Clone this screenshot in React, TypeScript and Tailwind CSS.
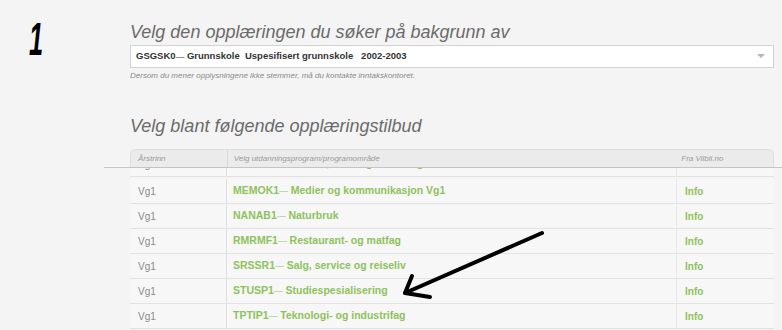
import React from "react";

const rows = [
  { code: "MEMOK1", name: "Medier og kommunikasjon Vg1" },
  { code: "NANAB1", name: "Naturbruk" },
  { code: "RMRMF1", name: "Restaurant- og matfag" },
  { code: "SRSSR1", name: "Salg, service og reiseliv" },
  { code: "STUSP1", name: "Studiespesialisering" },
  { code: "TPTIP1", name: "Teknologi- og industrifag" },
];

function Row({ code, name }: { code: string; name: string }) {
  return (
    <div className="flex h-[25px] border-b border-[#e2e2e2] bg-[#f7f7f7]">
      <div className="w-[96px] pl-2 flex items-center text-[10px] text-[#8a8a8a]">Vg1</div>
      <div className="w-[450px] pl-[6px] flex items-center border-l border-[#dedede] text-[10.5px] font-bold text-[#8fc25c] whitespace-pre">
        {code}
        <span className="tracking-[-0.5px] font-normal text-[8px]">----</span>
        <span className="ml-[3px]">{name}</span>
      </div>
      <div className="w-[98px] pl-[8px] flex items-center border-l border-[#e8e8e8] text-[10px] font-bold text-[#8fc25c]">Info</div>
    </div>
  );
}

export default function App() {
  return (
    <div
      className="relative w-[782px] h-[330px] overflow-hidden bg-[#f4f4f4] flex"
      style={{ fontFamily: '"Liberation Sans", Arial, sans-serif' }}
    >
      <div className="w-[130px] shrink-0">
        <div className="mt-[16px] ml-[29px] text-[46px] leading-[46px] font-bold text-black italic scale-x-[0.55] origin-left">1</div>
      </div>
      <div className="w-[644px] shrink-0 flex flex-col">
        <div className="mt-[20px] text-[18px] leading-[24px] italic text-[#6b6b6b]">
          Velg den opplæringen du søker på bakgrunn av
        </div>
        <div className="mt-[1px] h-[23px] bg-white border border-[#d3d3d3] flex items-center justify-between pl-[5px] pr-[8px]">
          <span className="text-[9.5px] text-[#333] font-bold whitespace-pre">
            GSGSK0<span className="font-normal tracking-[-0.5px] text-[8px]">----</span> Grunnskole  Uspesifisert grunnskole   2002-2003
          </span>
          <svg width="8" height="5" viewBox="0 0 8 5">
            <path d="M0 0 L8 0 L4 4 Z" fill="#b5b5b5" />
          </svg>
        </div>
        <div className="mt-[3px] text-[8px] leading-[10px] italic text-[#8a8a8a]">
          Dersom du mener opplysningene ikke stemmer, må du kontakte inntakskontoret.
        </div>
        <div className="mt-[33px] text-[18px] leading-[24px] italic text-[#6b6b6b]">
          Velg blant følgende opplæringstilbud
        </div>
        <div className="mt-[11px] h-[18px] flex rounded-t-[6px] bg-[#ebebeb] border border-[#dedede] border-b-0 text-[8px] italic text-[#9a9a9a]">
          <div className="w-[96px] pl-[7px] flex items-center">Årstrinn</div>
          <div className="w-[450px] pl-[6px] flex items-center border-l border-[#d8d8d8]">
            Velg utdanningsprogram/programområde
          </div>
          <div className="w-[98px] pl-[6px] flex items-center">Fra Vilbli.no</div>
        </div>
        <div className="h-px bg-[#c4c4c4] -ml-[26px] w-[678px]" />
        <div className="h-[11px] overflow-hidden">
          <div className="-mt-[16px]">
            <Row code="MDMDD1" name="Musikk, dans og drama Vg1" />
          </div>
        </div>
        {rows.map((r) => (
          <Row key={r.code} code={r.code} name={r.name} />
        ))}
      </div>
      <svg className="absolute left-0 top-0 pointer-events-none" width="782" height="330">
        <path d="M542 233 L405 293" stroke="#000" strokeWidth="4" strokeLinecap="round" fill="none" />
        <path d="M412 276 L405 293 L430 297" stroke="#000" strokeWidth="4" strokeLinecap="round" strokeLinejoin="round" fill="none" />
      </svg>
    </div>
  );
}
